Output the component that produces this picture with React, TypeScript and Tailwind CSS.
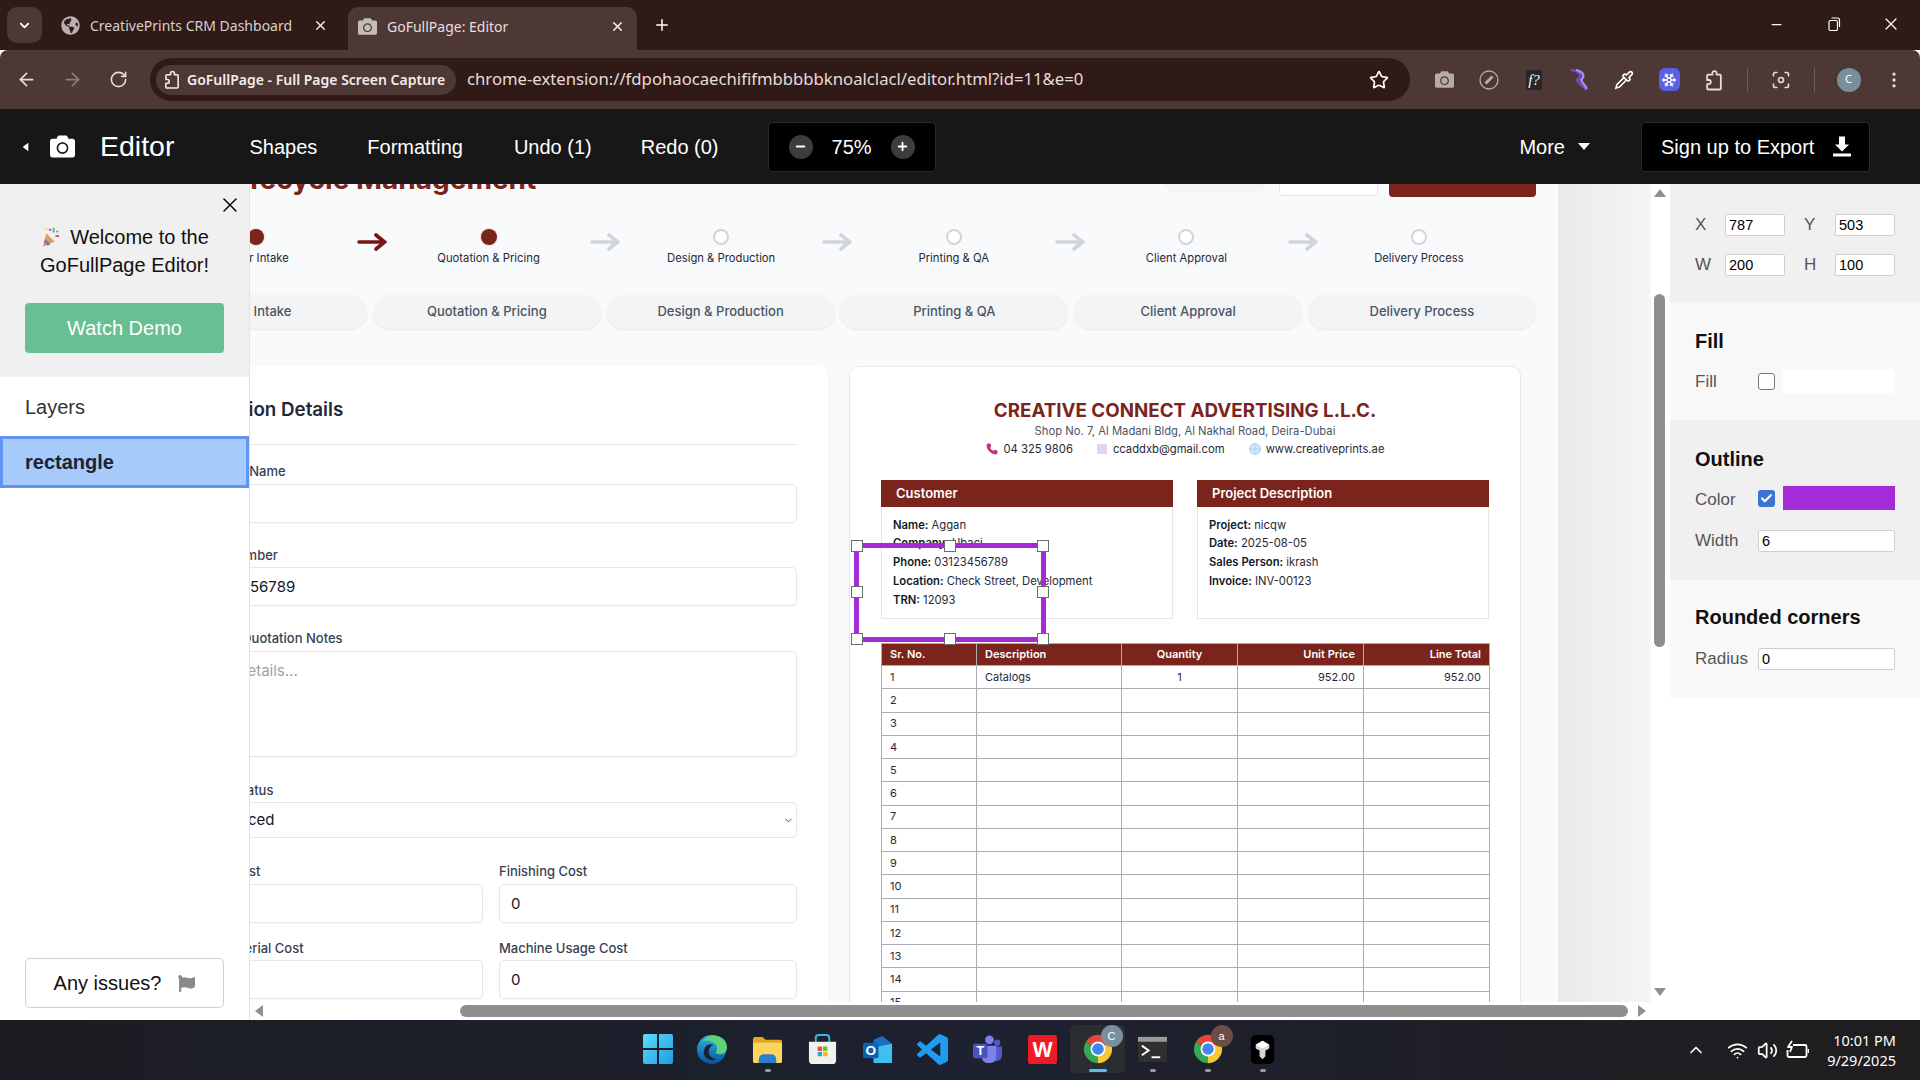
import React from "react";
import {
  ArrowLeft,
  ArrowRight,
  Check,
  ChevronDown,
  ChevronUp,
  EllipsisVertical,
  Focus,
  Minus,
  Phone,
  Pipette,
  Plus,
  RotateCw,
  Snowflake,
  Star,
  Volume2,
  Wifi,
  X,
} from "lucide-react";
import { FaCamera, FaFlag, FaGlobeAmericas } from "react-icons/fa";

const STEPS = ["Order Intake", "Quotation & Pricing", "Design & Production", "Printing & QA", "Client Approval", "Delivery Process"];
const ROWS = Array.from({ length: 15 }, (_, i) => i + 1);

const TriangleLeft = ({ className }: { className?: string }) => (
  <svg viewBox="0 0 10 14" className={className}>
    <path d="M9 1v12L1 7z" fill="currentColor" />
  </svg>
);

const ExtensionIcon = ({ className }: { className?: string }) => (
  <svg viewBox="0 0 18 20" className={className} fill="none" stroke="currentColor" strokeWidth="1.7" strokeLinejoin="round">
    <path d="M3 5h4V3.5a2 2 0 0 1 4 0V5h3a1 1 0 0 1 1 1v12a1 1 0 0 1-1 1H3a1 1 0 0 1-1-1v-4h1.5a2 2 0 0 0 0-4H2V6a1 1 0 0 1 1-1z" />
  </svg>
);

const PartyPopper = () => (
  <svg viewBox="0 0 22 24" className="h-[22px] w-[20px]">
    <path d="M3 23l4-15 9 9z" fill="#d9a066" />
    <path d="M5.5 14l6 6-3 1.5-4-4z" fill="#8e6bbf" />
    <circle cx="11" cy="4" r="1.3" fill="#e0457b" />
    <circle cx="19" cy="6" r="1.2" fill="#35a7e0" />
    <rect x="14" y="2" width="2" height="5" fill="#49b86f" />
    <rect x="17" y="10" width="4" height="2" fill="#e0457b" />
    <circle cx="7" cy="3" r="1" fill="#f2c230" />
  </svg>
);

const StepArrow = ({ active }: { active: boolean }) => (
  <svg viewBox="0 0 30 18" className={`mt-1 h-[18px] w-[30px] shrink-0 ${active ? "text-[#7b1414]" : "text-[#d1d5db]"}`} fill="none" stroke="currentColor" strokeWidth="3.6" strokeLinecap="round" strokeLinejoin="round">
    <path d="M2 9h26M19 2l8.5 7L19 16" />
  </svg>
);

const Field = ({ label, value, className }: { label: string; value?: string; className?: string }) => (
  <div className={className}>
    <div className="mb-[4.5px] h-4 text-[13px] leading-4 font-medium whitespace-nowrap text-[#374151]">{label}</div>
    <input readOnly defaultValue={value} className="block h-[39px] w-full rounded-[5px] border border-[#e5e7eb] bg-white px-[11px] text-[15px] text-[#111827] shadow-[0_1px_1px_rgba(0,0,0,0.03)]" />
  </div>
);

const InfoLine = ({ k, v }: { k: string; v: string }) => (
  <div className="h-[18.75px] text-[11.25px] leading-[18.75px] whitespace-nowrap text-[#1f2937]">
    <b className="font-semibold text-[#111827]">{k}:</b> {v}
  </div>
);

const InfoBox = ({ title, children }: { title: string; children: React.ReactNode }) => (
  <div className="h-[139px] border border-[#e5e7eb] bg-white">
    <div className="-mx-px -mt-px flex h-[27px] items-center bg-[#7b241c] pl-[15px] text-[13px] font-semibold text-white">{title}</div>
    <div className="pt-[8.5px] pl-[11px]">{children}</div>
  </div>
);

const Handle = ({ className }: { className: string }) => (
  <div className={`absolute h-3 w-3 border border-[#6b6b6b] bg-white ${className}`} />
);

const RightInput = ({ value, className }: { value: string; className: string }) => (
  <input readOnly defaultValue={value} className={`h-[22px] rounded-[2px] border border-[#cfcfcf] bg-white px-[3px] text-[14.5px] text-black ${className}`} />
);

const Chrome = ({ badge, badgeColor }: { badge: string; badgeColor: string }) => (
  <div className="relative h-[34px] w-[34px]">
    <svg viewBox="0 0 48 48" className="h-full w-full">
      <path d="M24 24L6.7 14A20 20 0 0 1 41.3 14z" fill="#e5453a" />
      <path d="M24 24L41.3 14A20 20 0 0 1 24 44z" fill="#f8c830" />
      <path d="M24 24L24 44A20 20 0 0 1 6.7 14z" fill="#34a853" />
      <circle cx="24" cy="24" r="10.5" fill="#fff" />
      <circle cx="24" cy="24" r="8.2" fill="#3f86f0" />
    </svg>
    <div className="absolute -top-[7px] -right-[8px] flex h-[22px] w-[22px] items-center justify-center rounded-full text-[11px] text-white" style={{ backgroundColor: badgeColor }}>
      {badge}
    </div>
  </div>
);

const TaskIcons: React.ReactNode[] = [
  <svg key="win" viewBox="0 0 30 30" className="h-[30px] w-[30px]">
    <defs>
      <linearGradient id="winG" x1="0" y1="0" x2="1" y2="1">
        <stop offset="0" stopColor="#5fdcfb" />
        <stop offset="1" stopColor="#1b9de2" />
      </linearGradient>
    </defs>
    <path d="M0 2a2 2 0 0 1 2-2h12v14H0zM16 0h12a2 2 0 0 1 2 2v12H16zM0 16h14v14H2a2 2 0 0 1-2-2zM16 16h14v12a2 2 0 0 1-2 2H16z" fill="url(#winG)" />
  </svg>,
  <svg key="edge" viewBox="0 0 32 32" className="h-[31px] w-[31px]">
    <defs>
      <linearGradient id="edgeG" x1="0" y1="0" x2="0" y2="1">
        <stop offset="0" stopColor="#2bb8e6" />
        <stop offset="1" stopColor="#0b4f9e" />
      </linearGradient>
    </defs>
    <circle cx="15" cy="16" r="15" fill="url(#edgeG)" />
    <path d="M5 9C9 1 20-1 27 5c4 4 5 9 3 13-2 3-8 4-11 1 3-3 2-8-2-10C12 6 7 6 5 9z" fill="#5cd27a" />
    <path d="M17 11c-5-2-10 2-10 8 0 4 4 8 9 8 2 0 3-1 4-1-5-1-8-4-8-8 0-3 2-6 5-7z" fill="#1d2030" />
  </svg>,
  <svg key="folder" viewBox="0 0 32 32" className="h-[31px] w-[31px]">
    <path d="M1 5a2 2 0 0 1 2-2h8l3 3h15a2 2 0 0 1 2 2v4H1z" fill="#e2a81f" />
    <path d="M1 9h30v19a2 2 0 0 1-2 2H3a2 2 0 0 1-2-2z" fill="#fdd55e" />
    <path d="M7 30v-4a5 5 0 0 1 5-5h8a5 5 0 0 1 5 5v4z" fill="#2a7fd0" />
  </svg>,
  <svg key="store" viewBox="0 0 32 32" className="h-[31px] w-[31px]">
    <path d="M9 8V4a3 3 0 0 1 3-3h8a3 3 0 0 1 3 3v4" fill="none" stroke="#35b8e8" strokeWidth="2" />
    <path d="M2 8h28v19a4 4 0 0 1-4 4H6a4 4 0 0 1-4-4z" fill="#f3f1ee" />
    <rect x="11" y="13" width="4.5" height="4.5" fill="#e8502c" />
    <rect x="16.5" y="13" width="4.5" height="4.5" fill="#6dbb2c" />
    <rect x="11" y="18.5" width="4.5" height="4.5" fill="#2aa4e8" />
    <rect x="16.5" y="18.5" width="4.5" height="4.5" fill="#f5ba1d" />
  </svg>,
  <svg key="outlook" viewBox="0 0 32 32" className="h-[31px] w-[31px]">
    <path d="M12 6l9-4 10 8v20H12z" fill="#1a6fc4" />
    <path d="M12 14l19-4v20H12z" fill="#3dc0ee" />
    <rect x="1" y="9" width="16" height="16" rx="2" fill="#0f5fb5" />
    <text x="9" y="22" textAnchor="middle" fontSize="14" fontWeight="700" fill="#fff" fontFamily="Liberation Sans">O</text>
  </svg>,
  <svg key="code" viewBox="0 0 24 24" className="h-[31px] w-[31px]">
    <path d="M23.15 2.587L18.21.21a1.494 1.494 0 0 0-1.705.29l-9.46 8.63-4.12-3.128a.999.999 0 0 0-1.276.057L.327 7.261A1 1 0 0 0 .326 8.74L3.899 12 .326 15.26a1 1 0 0 0 .001 1.479L1.65 17.94a.999.999 0 0 0 1.276.057l4.12-3.128 9.46 8.63a1.492 1.492 0 0 0 1.704.29l4.942-2.377A1.5 1.5 0 0 0 24 20.06V3.939a1.5 1.5 0 0 0-.85-1.352zm-5.146 14.861L10.826 12l7.178-5.448v10.896z" fill="#1f9cf0" />
  </svg>,
  <svg key="teams" viewBox="0 0 32 32" className="h-[31px] w-[31px]">
    <circle cx="18" cy="6" r="4.5" fill="#7b83eb" />
    <circle cx="26" cy="9" r="3.2" fill="#5059c9" />
    <path d="M21 13h10v9a6 6 0 0 1-6 6h-2z" fill="#5059c9" />
    <path d="M10 12h15v12a6 6 0 0 1-6 6h-3a6 6 0 0 1-6-6z" fill="#7b83eb" />
    <rect x="1" y="10" width="15" height="15" rx="2" fill="#4b53bc" />
    <text x="8.5" y="22" textAnchor="middle" fontSize="13" fontWeight="700" fill="#fff" fontFamily="Liberation Sans">T</text>
  </svg>,
  <svg key="wps" viewBox="0 0 32 32" className="h-[31px] w-[31px]">
    <rect width="30" height="30" x="1" y="1" rx="3" fill="#f11a24" />
    <text x="16" y="24" textAnchor="middle" fontSize="22" fontWeight="700" fill="#fff" fontFamily="Liberation Sans">W</text>
  </svg>,
  <Chrome key="chrome" badge="C" badgeColor="#7a8f9e" />,
  <svg key="term" viewBox="0 0 32 32" className="h-[31px] w-[31px]">
    <rect x="1" y="3" width="30" height="26" rx="1" fill="#2f2f2f" />
    <rect x="1" y="3" width="30" height="5" fill="#9a9a9a" />
    <path d="M5 12l7 5-7 5" fill="none" stroke="#fff" strokeWidth="2" />
    <path d="M15 24h9" stroke="#fff" strokeWidth="2" />
  </svg>,
  <Chrome key="chrome2" badge="a" badgeColor="#6b4d46" />,
  <svg key="cube" viewBox="0 0 32 32" className="h-[31px] w-[31px]">
    <rect x="4" y="1" width="24" height="30" rx="5" fill="#000" />
    <path d="M16 7l7 4v4l-4 2v6l-3 3-3-3v-6l-4-2v-4z" fill="#d8d8d8" />
    <path d="M16 7l7 4-7 4-7-4z" fill="#fff" />
  </svg>,
];

const TASK_DOTS = [2, 9, 10, 11];

export default function App() {
  return (
    <div className="flex h-screen w-full flex-col overflow-hidden bg-white font-['Liberation_Sans',sans-serif]">
      {/* tab strip */}
      <div className="flex h-[50px] shrink-0 bg-[#2f1a18] pl-[7px] font-['Noto_Sans',sans-serif] text-[14px] text-[#d9cfcd]">
        <div className="mt-[7px] flex h-9 w-[35px] items-center justify-center rounded-[10px] bg-[#4e3836]">
          <ChevronDown size={15} strokeWidth={3} className="text-white" />
        </div>
        <div className="mt-[7px] ml-2 flex h-9 w-[298px] items-center pl-[11px]">
          <FaGlobeAmericas size={19} className="text-[#b9b0ae]" />
          <span className="ml-[10px]">CreativePrints CRM Dashboard</span>
          <X size={15} strokeWidth={2.5} className="mr-[20px] ml-auto text-[#e8dfdd]" />
        </div>
        <div className="mt-[7px] flex h-[43px] w-[289px] items-start rounded-t-[10px] bg-[#4e3836] pt-[9px] pl-[10px]">
          <FaCamera size={19} className="mt-px text-[#c5bcba]" />
          <span className="ml-[10px] text-[#e8dfdd]">GoFullPage: Editor</span>
          <X size={15} strokeWidth={2.5} className="mt-[3px] mr-[12px] ml-auto text-[#f2eceb]" />
        </div>
        <Plus size={18} strokeWidth={2} className="mt-[16px] ml-4 text-white" />
        <div className="ml-auto flex h-12 items-center text-white">
          <div className="flex w-[57.5px] justify-center"><Minus size={15} /></div>
          <div className="flex w-[57.5px] justify-center">
            <svg viewBox="0 0 14 14" className="h-[14px] w-[14px]" fill="none" stroke="currentColor" strokeWidth="1.2">
              <rect x="2" y="3.5" width="8.5" height="10" rx="1.5" />
              <path d="M4.5 1h6a2 2 0 0 1 2 2v7" />
            </svg>
          </div>
          <div className="flex w-[57.5px] justify-center"><X size={20} strokeWidth={1.5} /></div>
        </div>
      </div>

      {/* toolbar */}
      <div className="flex h-[59px] shrink-0 items-center rounded-t-[8px] bg-[#4e3836] pl-[3px] font-['Noto_Sans',sans-serif] text-[#e6dcda]">
        <div className="flex w-[46px] justify-center"><ArrowLeft size={21} /></div>
        <div className="flex w-[46px] justify-center"><ArrowRight size={21} className="text-[#8d7c7a]" /></div>
        <div className="flex w-[46px] justify-center"><RotateCw size={19} /></div>
        <div className="ml-[9px] flex h-[43px] w-[1260px] items-center rounded-full bg-[#2f1a18] pl-[6px]">
          <div className="flex h-[30px] w-[300px] items-center rounded-full bg-[#4e3836] pl-2 text-[14px] font-semibold whitespace-nowrap text-[#f2eceb]">
            <ExtensionIcon className="mr-[6px] h-[19px] w-[17px]" />
            <span className="-mt-px">GoFullPage - Full Page Screen Capture</span>
          </div>
          <span className="-mt-px ml-[11px] text-[16.7px]">chrome-extension://fdpohaocaechififmbbbbbknoalclacl/editor.html?id=11&amp;e=0</span>
          <Star size={20} className="mr-[21px] ml-auto text-white" />
        </div>
        <div className="ml-[11.5px] flex w-[45px] justify-center"><FaCamera size={19} className="text-[#b5acaa]" /></div>
        <div className="flex w-[45px] justify-center">
          <svg viewBox="0 0 20 20" className="h-5 w-5 text-[#b5acaa]" fill="none" stroke="currentColor" strokeWidth="1.3">
            <circle cx="10" cy="10" r="9" />
            <path d="M6.5 13.5l7-7" strokeWidth="3" />
          </svg>
        </div>
        <div className="flex w-[45px] justify-center">
          <span className="rounded-[2px] bg-[#262626] px-[2px] font-['Liberation_Serif',serif] text-[15px] leading-[20px] text-white italic">f?</span>
        </div>
        <div className="flex w-[45px] justify-center">
          <svg viewBox="0 0 20 24" className="h-[24px] w-[20px]" fill="none" strokeWidth="2.4">
            <path d="M2 2c9 1 12 5 6 10 2 5 6 5 9 10" stroke="#6a4bd6" />
            <path d="M7 2c8 2 9 6 5 10 2 4 4 5 6 9" stroke="#a58cf0" />
          </svg>
        </div>
        <div className="flex w-[45px] justify-center"><Pipette size={20} className="text-white" /></div>
        <div className="flex w-[45px] justify-center">
          <div className="flex h-[23px] w-[21px] items-center justify-center rounded-[6px] bg-[#5a5fe6]"><Snowflake size={16} className="text-white" /></div>
        </div>
        <div className="flex w-[45px] justify-center"><ExtensionIcon className="h-[22px] w-[19px] text-[#ead9d6]" /></div>
        <div className="ml-[10.5px] h-6 w-px bg-[#6f5b59]" />
        <div className="ml-[10px] flex w-[45px] justify-center"><Focus size={20} /></div>
        <div className="ml-[11px] h-6 w-px bg-[#6f5b59]" />
        <div className="ml-[11px] flex w-[45px] justify-center">
          <div className="flex h-6 w-6 items-center justify-center rounded-full bg-[#7a8f9e] text-[11px] text-white">C</div>
        </div>
        <div className="flex w-[45px] justify-center"><EllipsisVertical size={20} /></div>
      </div>

      {/* editor header */}
      <div className="flex h-[75px] shrink-0 items-center bg-[#171717] text-[20px] text-white">
        <TriangleLeft className="ml-[22px] h-[12px] w-[7px]" />
        <FaCamera size={25} className="ml-[21px]" />
        <span className="ml-[25px] text-[28.5px]">Editor</span>
        <span className="ml-[75px]">Shapes</span>
        <span className="ml-[50px]">Formatting</span>
        <span className="ml-[51px]">Undo (1)</span>
        <span className="ml-[49px]">Redo (0)</span>
        <div className="ml-[49px] flex h-[50px] w-[168px] items-center rounded-[4px] border border-[#2a2a2a] bg-black pl-[20px]">
          <div className="flex h-6 w-6 items-center justify-center rounded-full bg-[#3d3d3d]"><Minus size={13} strokeWidth={3.5} /></div>
          <span className="ml-[19px] w-[39px]">75%</span>
          <div className="ml-[20px] flex h-6 w-6 items-center justify-center rounded-full bg-[#3d3d3d]"><Plus size={13} strokeWidth={3.5} /></div>
        </div>
        <span className="ml-auto">More</span>
        <svg viewBox="0 0 12 7" className="mr-[51px] ml-[13px] h-[7px] w-3"><path d="M0 0h12L6 7z" fill="#fff" /></svg>
        <div className="mr-[50px] flex h-[50px] w-[229px] items-center rounded-[4px] border border-[#2a2a2a] bg-black pl-[19px]">
          Sign up to Export
          <svg viewBox="0 0 18 20" className="ml-[19px] h-[21px] w-[18px]" fill="#fff">
            <path d="M6 0h6v8h4l-7 7-7-7h4zM0 17h18v3H0z" />
          </svg>
        </div>
      </div>

      <div className="flex min-h-0 flex-1">
        {/* left sidebar */}
        <div className="flex w-[250px] shrink-0 flex-col border-r border-[#e2e2e2] bg-white pb-3 text-[20px]">
          <div className="relative h-[193px] bg-[#f0f0f0] px-[25px] pt-[39px] text-center leading-[28px] text-[#111]">
            <X size={24} strokeWidth={1.5} className="absolute top-[9px] right-[7.5px] text-black" />
            <div className="flex items-center justify-center gap-[10px]"><PartyPopper />Welcome to the</div>
            <div>GoFullPage Editor!</div>
            <div className="mt-[24px] flex h-[50px] items-center justify-center rounded-[4px] bg-[#68bf92] text-white">Watch Demo</div>
          </div>
          <div className="h-[59px] pt-[18px] pl-[25px] leading-[24px] text-[#333]">Layers</div>
          <div className="flex h-[52px] items-center border-[3px] border-[#6096f2] bg-[#a6cafa] pl-[22px] font-bold text-[#1a2433]">rectangle</div>
          <div className="mx-[25px] mt-auto flex h-[50px] items-center justify-center gap-[17px] rounded-[5px] border border-[#cfcfcf] bg-white text-[#111]">
            Any issues?
            <FaFlag size={17} className="text-[#8a8a8a]" />
          </div>
        </div>

        {/* canvas */}
        <div className="flex min-w-0 flex-1 flex-col bg-white">
          <div className="flex min-h-0 flex-1">
            <div className="relative flex min-w-0 flex-1 overflow-hidden font-['Inter',sans-serif]">
              <div className="h-full w-[1308px] shrink-0 overflow-hidden bg-[#f9fafb]">
                <div className="ml-[-111px] w-[1397px]">
                  <div className="-mt-[37px] flex h-[50px] items-end">
                    <h1 className="-mb-[2px] ml-[2px] text-[28px] leading-[40px] font-bold whitespace-nowrap text-[#7b241c]">Order Lifecycle Management</h1>
                    <div className="mb-[5px] ml-auto h-10 w-[102px] rounded-[10px] bg-[#f3f4f6]" />
                    <div className="mb-px ml-[13px] h-10 w-[99px] rounded-[4px] border border-[#e5e7eb] bg-white" />
                    <div className="ml-[11px] h-10 w-[147px] rounded-[4px] bg-[#7b241c]" />
                  </div>

                  <div className="mt-8 flex pl-[15.7px]">
                    {STEPS.map((s, i) => (
                      <React.Fragment key={s}>
                        <div className="flex w-[202.6px] shrink-0 flex-col items-center gap-[5px]">
                          <div className={`h-4 w-4 rounded-full ${i < 2 ? "bg-[#7b241c] ring-1 ring-[#f3dcd9]" : "border-2 border-[#d1d5db] bg-white"}`} />
                          <div className="h-4 text-[11.25px] leading-4 text-[#1f2937]">{s}</div>
                        </div>
                        {i < 5 && <StepArrow active={i === 0} />}
                      </React.Fragment>
                    ))}
                  </div>

                  <div className="mt-[29px] grid grid-cols-6 gap-[5.6px]">
                    {STEPS.map((s) => (
                      <div key={s} className="flex h-[34px] items-center justify-center rounded-full bg-[#f3f4f6] text-[13px] font-medium text-[#4b5563] shadow-[0_1px_2px_rgba(0,0,0,0.08)]">
                        {s}
                      </div>
                    ))}
                  </div>

                  <div className="mt-[37px] ml-[15px] flex items-start gap-[21px]">
                    {/* quotation form */}
                    <div className="w-[674px] shrink-0 rounded-[10px] bg-white px-[31px] pt-[31px] shadow-[0_1px_3px_rgba(0,0,0,0.05)]">
                      <h2 className="ml-[2px] h-[26px] text-[18.75px] leading-[26px] font-semibold whitespace-nowrap text-[#1f2937]">Quotation Details</h2>
                      <div className="mt-[21px] mb-[18px] h-px bg-[#e5e7eb]" />
                      <div className="flex flex-col gap-6 pb-10">
                        <Field label="Customer Name" />
                        <Field label="Phone Number" value="03123456789" />
                        <div>
                          <div className="mb-[4.5px] ml-[2px] h-4 text-[13px] leading-4 font-medium whitespace-nowrap text-[#374151]">Detailed Quotation Notes</div>
                          <textarea readOnly placeholder="Enter details..." className="block h-[106px] w-full resize-none rounded-[5px] border border-[#e5e7eb] bg-white px-[11px] py-2 text-[15px] text-[#111827] shadow-[0_1px_1px_rgba(0,0,0,0.03)] placeholder:text-[#9ca3af]" />
                        </div>
                        <div className="mt-px">
                          <div className="mb-[4.5px] ml-[10px] h-4 text-[13px] leading-4 font-medium whitespace-nowrap text-[#374151]">Order Status</div>
                          <div className="relative">
                            <select defaultValue="Produced" className="block h-9 w-full appearance-none rounded-[5px] border border-[#e5e7eb] bg-white px-5 text-[15px] text-[#111827]">
                              <option>Produced</option>
                            </select>
                            <ChevronDown size={11} strokeWidth={2} className="absolute top-[13px] right-[3px] text-[#374151]" />
                          </div>
                        </div>
                        <div className="mt-px grid grid-cols-[298px_298px] gap-x-4 gap-y-[17px]">
                          <Field label="Design Cost" />
                          <Field label="Finishing Cost" value="0" />
                          <Field label="Base Material Cost" className="[&>div]:ml-[2px]" />
                          <Field label="Machine Usage Cost" value="0" />
                        </div>
                      </div>
                    </div>

                    {/* invoice preview */}
                    <div className="w-[672px] shrink-0 rounded-[10px] border border-[#e5e7eb] bg-white px-[31px] pt-[32px]">
                      <div className="h-6 text-center text-[18.75px] leading-6 font-bold text-[#7b241c]">CREATIVE CONNECT ADVERTISING L.L.C.</div>
                      <div className="h-4 text-center text-[11.25px] leading-4 text-[#4b5563]">Shop No. 7, Al Madani Bldg, Al Nakhal Road, Deira-Dubai</div>
                      <div className="mt-[2px] flex h-4 items-center justify-center text-[11.25px] leading-4 text-[#1f2937]">
                        <Phone size={12} className="mr-[6px] fill-[#b83280] text-[#b83280]" />
                        04 325 9806
                        <span className="mr-[6px] ml-6 h-[10px] w-[10px] bg-[#e2d3ee]" />
                        ccaddxb@gmail.com
                        <svg viewBox="0 0 12 12" className="mr-[5px] ml-6 h-[12px] w-[12px]" fill="none" stroke="#a9d4f2" strokeWidth="1">
                          <circle cx="6" cy="6" r="5.5" fill="#cfe6f8" />
                          <path d="M0 6h12M6 0v12" />
                        </svg>
                        www.creativeprints.ae
                      </div>

                      <div className="mt-[23px] grid grid-cols-[292px_292px] gap-6">
                        <InfoBox title="Customer">
                          <InfoLine k="Name" v="Aggan" />
                          <InfoLine k="Company" v="Ubaci" />
                          <InfoLine k="Phone" v="03123456789" />
                          <InfoLine k="Location" v="Check Street, Development" />
                          <InfoLine k="TRN" v="12093" />
                        </InfoBox>
                        <InfoBox title="Project Description">
                          <InfoLine k="Project" v="nicqw" />
                          <InfoLine k="Date" v="2025-08-05" />
                          <InfoLine k="Sales Person" v="ikrash" />
                          <InfoLine k="Invoice" v="INV-00123" />
                        </InfoBox>
                      </div>

                      <table className="mt-6 mb-10 w-[608px] table-fixed border-collapse text-[11px] text-[#1f2937]">
                        <colgroup>
                          <col className="w-[95px]" />
                          <col className="w-[145px]" />
                          <col className="w-[116px]" />
                          <col className="w-[126px]" />
                          <col className="w-[126px]" />
                        </colgroup>
                        <thead>
                          <tr className="h-[22px] bg-[#7b241c] text-white">
                            <th className="border border-[#a8adb6] px-2 text-left font-semibold">Sr. No.</th>
                            <th className="border border-[#a8adb6] px-2 text-left font-semibold">Description</th>
                            <th className="border border-[#a8adb6] px-2 text-center font-semibold">Quantity</th>
                            <th className="border border-[#a8adb6] px-2 text-right font-semibold">Unit Price</th>
                            <th className="border border-[#a8adb6] px-2 text-right font-semibold">Line Total</th>
                          </tr>
                        </thead>
                        <tbody>
                          {ROWS.map((n) => (
                            <tr key={n} className="h-[23.25px]">
                              <td className="border border-[#a8adb6] px-2">{n}</td>
                              <td className="border border-[#a8adb6] px-2">{n === 1 ? "Catalogs" : ""}</td>
                              <td className="border border-[#a8adb6] px-2 text-center">{n === 1 ? "1" : ""}</td>
                              <td className="border border-[#a8adb6] px-2 text-right">{n === 1 ? "952.00" : ""}</td>
                              <td className="border border-[#a8adb6] px-2 text-right">{n === 1 ? "952.00" : ""}</td>
                            </tr>
                          ))}
                        </tbody>
                      </table>
                    </div>
                  </div>
                </div>
              </div>
              <div className="flex-1 bg-gradient-to-r from-[#e9e9e9] to-[#f6f6f6]" />

              {/* selected rectangle on the canvas */}
              <div className="absolute top-[358.5px] left-[603.5px] h-[99px] w-[192.5px] border-[5px] border-[#a52bd8]">
                <Handle className="-top-[8px] -left-[8px]" />
                <Handle className="-top-[8px] left-[85px]" />
                <Handle className="-top-[8px] -right-[8px]" />
                <Handle className="top-[38.5px] -left-[8px]" />
                <Handle className="top-[38.5px] -right-[8px]" />
                <Handle className="-bottom-[8px] -left-[8px]" />
                <Handle className="-bottom-[8px] left-[85px]" />
                <Handle className="-right-[8px] -bottom-[8px]" />
              </div>
            </div>

            {/* vertical scrollbar */}
            <div className="flex w-[19px] shrink-0 flex-col items-center bg-white pt-[5px] pr-[2px]">
              <svg viewBox="0 0 12 8" className="h-2 w-3"><path d="M6 0l6 8H0z" fill="#8f8f8f" /></svg>
              <div className="mt-[97px] h-[353px] w-[11px] rounded-full bg-[#8f8f8f]" />
              <svg viewBox="0 0 12 8" className="mt-auto mb-[6px] h-2 w-3"><path d="M6 8L0 0h12z" fill="#8f8f8f" /></svg>
            </div>
          </div>

          {/* horizontal scrollbar */}
          <div className="flex h-[18px] shrink-0 items-center bg-white">
            <TriangleLeft className="ml-1 h-4 w-[10px] text-[#8f8f8f]" />
            <div className="ml-[196px] h-3 w-[1168px] rounded-full bg-[#8f8f8f]" />
            <TriangleLeft className="ml-[9px] h-4 w-[10px] rotate-180 text-[#8f8f8f]" />
          </div>
        </div>

        {/* right properties panel */}
        <div className="flex w-[250px] shrink-0 flex-col bg-white text-[17px] text-[#555]">
          <div className="grid h-[118px] grid-cols-[30px_60px_50px_60px] content-start items-center gap-y-[14.5px] bg-[#f0f0f0] pt-[28px] pl-[25px]">
            <span>X</span>
            <RightInput value="787" className="w-[60px]" />
            <span className="ml-[19px]">Y</span>
            <RightInput value="503" className="w-[60px]" />
            <span>W</span>
            <RightInput value="200" className="w-[60px]" />
            <span className="ml-[19px]">H</span>
            <RightInput value="100" className="w-[60px]" />
          </div>
          <div className="h-[118px] bg-[#f8f8f8] pt-[27px] pl-[25px]">
            <div className="text-[20px] leading-6 font-bold text-[#111]">Fill</div>
            <div className="mt-[16px] flex h-6 items-center">
              <span className="w-[63px] pt-[2px]">Fill</span>
              <input type="checkbox" readOnly className="h-[17px] w-[17px] appearance-none rounded-[3px] border border-[#767676] bg-white" />
              <div className="ml-2 h-6 w-[112px] bg-white" />
            </div>
          </div>
          <div className="h-[160px] bg-[#f0f0f0] pt-[27px] pl-[25px]">
            <div className="text-[20px] leading-6 font-bold text-[#111]">Outline</div>
            <div className="mt-[15px] flex h-6 items-center">
              <span className="w-[63px] pt-[3px]">Color</span>
              <div className="flex h-[17px] w-[17px] items-center justify-center rounded-[3px] bg-[#3b74d4]"><Check size={13} strokeWidth={4} className="text-white" /></div>
              <div className="ml-2 h-6 w-[112px] bg-[#a52bd8]" />
            </div>
            <div className="mt-[20px] flex h-[22px] items-center">
              <span className="w-[63px]">Width</span>
              <RightInput value="6" className="w-[137px]" />
            </div>
          </div>
          <div className="h-[118px] bg-[#f8f8f8] pt-[25px] pl-[25px]">
            <div className="text-[20px] leading-6 font-bold text-[#111]">Rounded corners</div>
            <div className="mt-[19px] flex h-[22px] items-center">
              <span className="w-[63px]">Radius</span>
              <RightInput value="0" className="w-[137px]" />
            </div>
          </div>
        </div>
      </div>

      {/* windows taskbar */}
      <div className="grid h-[60px] shrink-0 grid-cols-[1fr_auto_1fr] bg-gradient-to-r from-[#1c1d22] via-[#1d2130] to-[#1f1d1e] text-white">
        <div />
        <div className="flex">
          {TaskIcons.map((icon, i) => (
            <div key={i} className={`relative mt-[5px] flex h-[48px] w-[55px] items-center justify-center rounded-[5px] ${i === 8 ? "bg-[#2c2d33]" : ""}`}>
              {icon}
              {i === 8 && <div className="absolute bottom-[1px] h-[3px] w-[18px] rounded-full bg-[#5cc0ee]" />}
              {TASK_DOTS.includes(i) && <div className="absolute bottom-[1px] h-[3px] w-[6px] rounded-full bg-[#9a9a9a]" />}
            </div>
          ))}
        </div>
        <div className="flex items-center justify-end pr-[24px] font-['Noto_Sans',sans-serif]">
          <ChevronUp size={20} className="mr-[21px]" />
          <Wifi size={21} className="mr-[9px]" />
          <Volume2 size={21} className="mr-[7px]" />
          <svg viewBox="0 0 24 20" className="mr-[18px] h-[20px] w-[24px]" fill="none" stroke="currentColor" strokeWidth="1.8" strokeLinejoin="round">
            <path d="M8 5h12a1.5 1.5 0 0 1 1.5 1.5v9A1.5 1.5 0 0 1 20 17H4a1.5 1.5 0 0 1-1.5-1.5V10" />
            <path d="M23.5 9v4" />
            <path d="M7 1L3 7h4l-2 5" fill="none" />
          </svg>
          <div className="text-right text-[14.5px] leading-[20px]">
            <div>10:01 PM</div>
            <div>9/29/2025</div>
          </div>
        </div>
      </div>
    </div>
  );
}
